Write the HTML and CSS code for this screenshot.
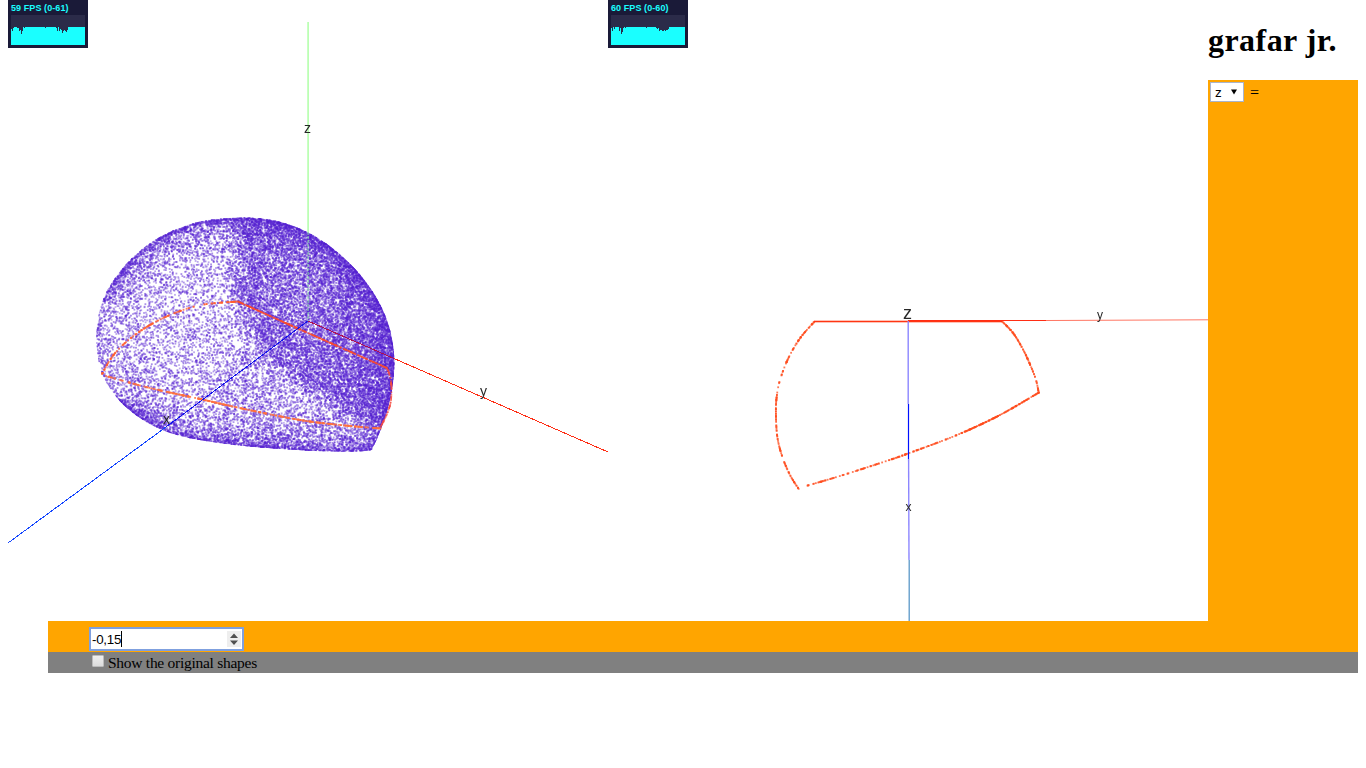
FILE: index.html
```html
<!DOCTYPE html>
<html lang="en">
<head>
<meta charset="utf-8">
<title>grafar jr.</title>
<link rel="stylesheet" href="styles.css">
</head>
<body>
<main class="workspace">
  <section class="plot">
    <div class="stats"><div class="stats-text">59 FPS (0-61)</div><canvas class="stats-graph" id="fps1" width="74" height="30"></canvas></div>
    <canvas id="cloud" class="scene" width="600" height="600"></canvas>
    <svg class="axes" viewBox="8 21 600 600">
      <path class="z-axis" d="M308.1 22V232"/>
      <path class="z-axis inner" d="M308.1 232V321"/>
      <path class="red-dark" d="M308 321L394 358.500"/>
      <path class="red" d="M394 358.500L608 452"/>
      <path class="blue" d="M308 321L166 427"/>
      <path class="blue-far" d="M166 427L8 543"/>
      <text x="304" y="133">z</text>
      <text x="480" y="396">y</text>
      <text x="163" y="424">x</text>
    </svg>
  </section>
  <section class="plot">
    <div class="stats"><div class="stats-text">60 FPS (0-60)</div><canvas class="stats-graph" id="fps2" width="74" height="30"></canvas></div>
    <canvas id="section" class="scene" width="600" height="600"></canvas>
    <svg class="axes" viewBox="608 21 600 600">
      <path class="red" d="M908 320.500H1046"/>
      <path class="red-far" d="M1046 320.500L1208 319.800"/>
      <path class="blue-pale" d="M908.200 321V404"/>
      <path class="blue-solid" d="M908.500 404V459"/>
      <path class="blue-pale" d="M908.600 459L909 560"/>
      <path class="blue-teal" d="M909.200 560V621"/>
      <text class="big" x="903" y="319">z</text>
      <text class="small" x="1097" y="319">y</text>
      <text class="small" x="905.500" y="511">x</text>
    </svg>
  </section>
  <aside class="sidebar">
    <h1 class="title">grafar jr.</h1>
    <div class="equations"><span class="select">z<svg class="arrow" viewBox="0 0 7 6"><path d="M0 0H7L3.500 6Z"/></svg></span><span class="equals">=</span></div>
  </aside>
</main>
<footer class="controls">
  <div class="value-row"><div class="number"><span class="value">-0,15</span><i class="caret"></i><span class="spinner"><svg viewBox="0 0 14 16"><path d="M3 7L7 2.500L11 7ZM3 9.500H11L7 14Z"/></svg></span></div></div>
  <div class="option-row"><span class="checkbox"></span><span class="label">Show the original shapes</span></div>
</footer>
<script src="plot.js"></script>
</body>
</html>
```
FILE: styles.css
```css
body { margin: 0 8px; background: #fff; color: #000; font: 16px "Liberation Serif", serif; }
.workspace { display: flex; height: 621px; }
.plot { position: relative; width: 600px; padding-top: 21px; box-sizing: border-box; }
.scene { display: block; }
.axes { position: absolute; left: 0; top: 21px; width: 600px; height: 600px; }
.axes path { fill: none; stroke-width: 1; }
.axes .z-axis { stroke: #b4ffac; stroke-width: 1.6; }
.axes .inner { stroke: #84d8a0; stroke-width: 1; stroke-dasharray: 3 1; }
.axes .red { stroke: #ff2d14; shape-rendering: crispEdges; }
.axes .red-dark { stroke: #b00d50; shape-rendering: crispEdges; }
.axes .red-far { stroke: #ff7663; }
.axes .blue { stroke: #1414ee; shape-rendering: crispEdges; }
.axes .blue-far { stroke: #1446ff; shape-rendering: crispEdges; }
.axes .blue-solid { stroke: #0010ff; stroke-width: 1.200; }
.axes .blue-pale { stroke: #8c86ff; stroke-width: 1.400; }
.axes .blue-teal { stroke: #5a98c8; stroke-width: 1.300; }
.axes text { font: 14px "Liberation Sans", sans-serif; fill: #282828; }
.axes .big { font-size: 18px; }
.axes .small { font-size: 12px; }
.stats { position: absolute; left: 0; top: 0; z-index: 1; width: 80px; height: 48px; padding: 0 3px 3px; box-sizing: border-box; background: #1a1a38; }
.stats-text { height: 15px; color: #1affff; font: bold 9px/16px "Liberation Sans", sans-serif; letter-spacing: 0.080px; white-space: nowrap; }
.stats-graph { display: block; background: #2b2b49; }
.sidebar { width: 150px; display: flex; flex-direction: column; }
.title { margin: 0; height: 80px; box-sizing: border-box; padding-top: 21px; font-size: 32px; line-height: 38px; letter-spacing: 0.450px; white-space: nowrap; }
.equations { flex: 1; display: flex; align-items: flex-start; gap: 6px; padding: 2px; background: #ffa500; line-height: 20px; }
.equals { padding-top: 1px; }
.select { display: flex; align-items: center; justify-content: space-between; width: 34px; height: 20px; box-sizing: border-box; padding: 1px 6px 0 4px; border: 1px solid #a9b4cc; background: #fff; font: 13.330px "Liberation Sans", sans-serif; }
.arrow { width: 6px; height: 6px; margin-bottom: 2px; }
.controls { margin-left: 40px; }
.value-row { height: 31px; box-sizing: border-box; padding: 6px 0 0 41px; background: #ffa500; }
.number { display: flex; align-items: center; width: 155px; height: 24px; box-sizing: border-box; padding: 0 1px 0 1px; border: 2px solid #7fa0df; background: #fff; font: 13.330px "Liberation Sans", sans-serif; }
.value { letter-spacing: -0.250px; }
.caret { width: 1px; height: 16px; background: #000; }
.spinner { width: 14px; height: 16px; margin-left: auto; background: #eee; }
.spinner svg { display: block; fill: #505050; }
.option-row { display: flex; height: 21px; box-sizing: border-box; padding: 3px 0 0 44px; gap: 4px; background: #808080; }
.checkbox { width: 12px; height: 12px; box-sizing: border-box; border: 1px solid #bbb; border-radius: 1px; background: linear-gradient(#eee, #dcdcdc); }
.label { font-size: 15.500px; line-height: 16px; letter-spacing: -0.270px; white-space: nowrap; }
```
FILE: plot.js
```js
let seed = 7341;
function rnd() {
  seed = (seed + 0x6D2B79F5) | 0;
  let t = Math.imul(seed ^ (seed >>> 15), 1 | seed);
  t = (t + Math.imul(t ^ (t >>> 7), 61 | t)) ^ t;
  return ((t ^ (t >>> 14)) >>> 0) / 4294967296;
}

function smooth(pts, closed, steps) {
  const out = [], n = pts.length;
  const at = i => closed ? pts[(i + n) % n] : pts[Math.max(0, Math.min(n - 1, i))];
  for (let i = 0; i < (closed ? n : n - 1); i++) {
    const a = at(i - 1), b = at(i), c = at(i + 1), d = at(i + 2);
    for (let k = 0; k < steps; k++) {
      const t = k / steps;
      out.push([0, 1].map(j => 0.5 * (2 * b[j] + (c[j] - a[j]) * t + (2 * a[j] - 5 * b[j] + 4 * c[j] - d[j]) * t * t + (3 * b[j] - a[j] - 3 * c[j] + d[j]) * t * t * t)));
    }
  }
  if (!closed) out.push(pts[n - 1]);
  return out;
}

function toPath(pts) {
  const p = new Path2D();
  pts.forEach(q => p.lineTo(q[0], q[1]));
  p.closePath();
  return p;
}

// Point cloud of the cut solid
const ctx = document.getElementById('cloud').getContext('2d');
const rim = smooth([[240,217.4],[262,218.3],[283,222.5],[308,232.3],[333,248.5],[357,271],[376,297],[388.3,324],[393.6,350],[394,373],[390,400],[382,426],[373.5,446],[367,450.8],[327,451.4],[280,449],[230,444.5],[187,437.5],[160,429],[137,416],[117,398],[102,374],[96.6,347],[96.6,327],[101.5,303],[113.3,280],[133.3,256.5],[160,236.5],[190,224],[213,219.3]], true, 12);
const outline = toPath(rim);
const face = [[238,205],[234,283],[243,323],[257,347],[280,370],[307,388],[347,409],[378,425],[420,430],[420,200]];
const facePath = toPath(face);
const clip = new Path2D();
rim.forEach(q => clip.lineTo(q[0] - 8, q[1] - 21));
ctx.save();
ctx.clip(clip);
for (let y = 214; y < 455; y++) {
  for (let x = 94; x < 397; x++) {
    if (!ctx.isPointInPath(outline, x + 0.5, y + 0.5)) continue;
    let d2 = 1e9;
    for (const q of rim) {
      const v = (q[0] - x - 0.5) ** 2 + (q[1] - y - 0.5) ** 2;
      if (v < d2) d2 = v;
    }
    const d = Math.sqrt(d2);
    const weak = x < 125 && y > 300 && y < 400 ? 0.12 : 1;
    let rate = 0.17 + weak * 1.3 * Math.exp(-d / 1.8) + weak * 0.42 * Math.exp(-d / 13) + 0.06 * Math.exp(-d / 35);
    if (ctx.isPointInPath(facePath, x + (rnd() - 0.5) * 18, y + (rnd() - 0.5) * 18)) {
      rate += 0.46;
      const inner = Math.hypot((x - 300) / 40, (y - 285) / 45);
      rate -= 0.12 * Math.exp(-inner * inner);
      rate += 0.15 * Math.exp(-(((x - 365) / 28) ** 2));
    } else if (x > 215 && y > 350) rate += 0.08;
    let p = Math.exp(-rate), s = p, u = rnd(), n = 0;
    while (u > s && n < 7) { n++; p *= rate / n; s += p; }
    for (let k = 0; k < n; k++) {
      ctx.fillStyle = 'rgba(84,32,208,' + (0.34 + rnd() * 0.22) + ')';
      ctx.fillRect(x - 8 + rnd() - 0.4, y - 21 + rnd() - 0.4, 1.8, 1.8);
    }
  }
}
ctx.restore();

// Scatters dots along a curve at random arc lengths; density is in dots per pixel
function trace(c, pts, ox, color, density, size) {
  c.fillStyle = color;
  const at = [0];
  for (let i = 1; i < pts.length; i++) {
    at.push(at[i - 1] + Math.hypot(pts[i][0] - pts[i - 1][0], pts[i][1] - pts[i - 1][1]));
  }
  const total = at[at.length - 1];
  for (let k = 0; k < total * density; k++) {
    const s = rnd() * total;
    let i = 1;
    while (i < at.length - 1 && at[i] < s) i++;
    const t = (s - at[i - 1]) / (at[i] - at[i - 1]);
    const x = pts[i - 1][0] + (pts[i][0] - pts[i - 1][0]) * t;
    const y = pts[i - 1][1] + (pts[i][1] - pts[i - 1][1]) * t;
    c.fillRect(x - ox - size / 2, y - 21 - size / 2, size, size);
  }
}
const orange = 'rgba(255,92,45,0.75)';
trace(ctx, smooth([[102,374],[112,357],[125,343],[145,328],[170,315],[201,305],[238,301.500]], false, 12), 8, orange, 0.8, 1.8);
trace(ctx, smooth([[238,301.5],[299,329],[387,368]], false, 20), 8, 'rgba(250,75,45,0.75)', 1.7, 1.6);
trace(ctx, smooth([[387,368],[391,381],[391,400],[387,414],[380,428]], false, 12), 8, 'rgba(245,75,65,0.7)', 1.2, 1.6);
trace(ctx, smooth([[106,376],[150,388],[200,399],[242,408.5],[300,420],[345,425.500],[381,428.500]], false, 12), 8, 'rgba(255,112,60,0.85)', 1, 1.800);

const c2 = document.getElementById('section').getContext('2d');
const red = 'rgba(255,76,30,0.75)';
trace(c2, smooth([[798.7,489],[790,475],[782.3,456.7],[777.3,436.7],[775.9,413],[776.7,396.7],[780,380],[788.3,358.3],[800,338.3],[814.3,321.7]], false, 12), 608, red, 0.9, 1.8);
trace(c2, smooth([[806,486],[840,476],[885,461.500],[908,453.500],[957,435],[1000,415],[1039,392.500]], false, 12), 608, red, 0.8, 1.8);
trace(c2, smooth([[966,431.300],[1000,415],[1039,392.500]], false, 12), 608, red, 1.3, 1.6);
trace(c2, smooth([[1001.7,321],[1013.3,333.3],[1023.3,350],[1030.7,366],[1036,380],[1038.7,392.7]], false, 12), 608, red, 1.2, 1.8);
c2.fillStyle = '#ff3512';
c2.fillRect(206, 299.700, 188, 1.600);

function fps(id, dips) {
  const c = document.getElementById(id).getContext('2d');
  c.fillStyle = '#1affff';
  for (let i = 0; i < 74; i++) {
    const h = 18 - (dips[i] || 0);
    c.fillRect(i, 30 - h, 1, h);
  }
}
fps('fps1', {0:2,1:4,2:1,6:1,7:1,8:4,9:3,10:7,11:4,13:1,34:1,45:1,46:4,48:4,49:2,50:3,51:6,52:4,53:3,54:4,55:5,56:3});
fps('fps2', {0:1,1:4,3:2,8:4,9:1,10:7,11:5,12:1,14:1,35:1,45:1,46:2,47:1,48:4,49:3,50:3,51:4,52:4,53:3,54:4,55:3,56:3,57:2});
```
